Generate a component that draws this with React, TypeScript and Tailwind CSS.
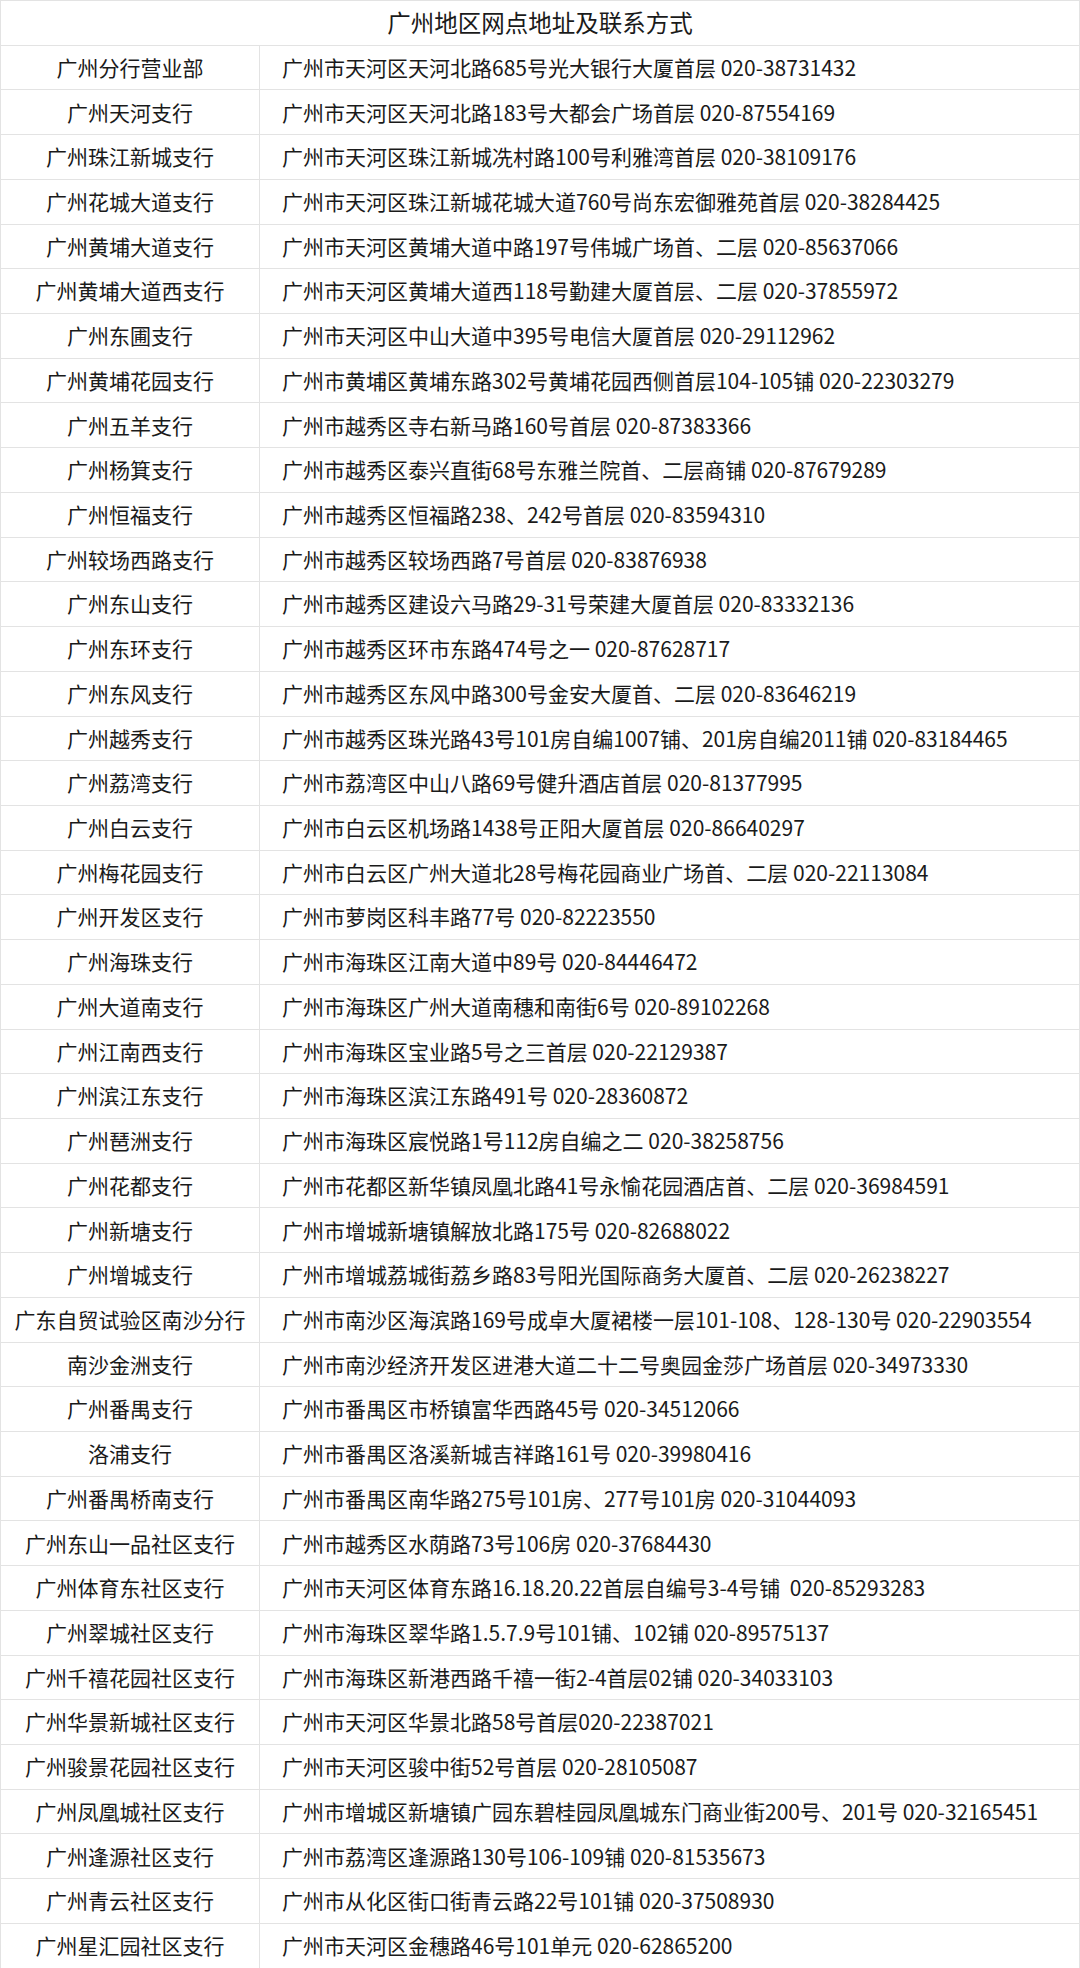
const branches: [string, string][] = [
  ['广州分行营业部', '广州市天河区天河北路685号光大银行大厦首层 020-38731432'],
  ['广州天河支行', '广州市天河区天河北路183号大都会广场首层 020-87554169'],
  ['广州珠江新城支行', '广州市天河区珠江新城冼村路100号利雅湾首层 020-38109176'],
  ['广州花城大道支行', '广州市天河区珠江新城花城大道760号尚东宏御雅苑首层 020-38284425'],
  ['广州黄埔大道支行', '广州市天河区黄埔大道中路197号伟城广场首、二层 020-85637066'],
  ['广州黄埔大道西支行', '广州市天河区黄埔大道西118号勤建大厦首层、二层 020-37855972'],
  ['广州东圃支行', '广州市天河区中山大道中395号电信大厦首层 020-29112962'],
  ['广州黄埔花园支行', '广州市黄埔区黄埔东路302号黄埔花园西侧首层104-105铺 020-22303279'],
  ['广州五羊支行', '广州市越秀区寺右新马路160号首层 020-87383366'],
  ['广州杨箕支行', '广州市越秀区泰兴直街68号东雅兰院首、二层商铺 020-87679289'],
  ['广州恒福支行', '广州市越秀区恒福路238、242号首层 020-83594310'],
  ['广州较场西路支行', '广州市越秀区较场西路7号首层 020-83876938'],
  ['广州东山支行', '广州市越秀区建设六马路29-31号荣建大厦首层 020-83332136'],
  ['广州东环支行', '广州市越秀区环市东路474号之一 020-87628717'],
  ['广州东风支行', '广州市越秀区东风中路300号金安大厦首、二层 020-83646219'],
  ['广州越秀支行', '广州市越秀区珠光路43号101房自编1007铺、201房自编2011铺 020-83184465'],
  ['广州荔湾支行', '广州市荔湾区中山八路69号健升酒店首层 020-81377995'],
  ['广州白云支行', '广州市白云区机场路1438号正阳大厦首层 020-86640297'],
  ['广州梅花园支行', '广州市白云区广州大道北28号梅花园商业广场首、二层 020-22113084'],
  ['广州开发区支行', '广州市萝岗区科丰路77号 020-82223550'],
  ['广州海珠支行', '广州市海珠区江南大道中89号 020-84446472'],
  ['广州大道南支行', '广州市海珠区广州大道南穗和南街6号 020-89102268'],
  ['广州江南西支行', '广州市海珠区宝业路5号之三首层 020-22129387'],
  ['广州滨江东支行', '广州市海珠区滨江东路491号 020-28360872'],
  ['广州琶洲支行', '广州市海珠区宸悦路1号112房自编之二 020-38258756'],
  ['广州花都支行', '广州市花都区新华镇凤凰北路41号永愉花园酒店首、二层 020-36984591'],
  ['广州新塘支行', '广州市增城新塘镇解放北路175号 020-82688022'],
  ['广州增城支行', '广州市增城荔城街荔乡路83号阳光国际商务大厦首、二层 020-26238227'],
  ['广东自贸试验区南沙分行', '广州市南沙区海滨路169号成卓大厦裙楼一层101-108、128-130号 020-22903554'],
  ['南沙金洲支行', '广州市南沙经济开发区进港大道二十二号奥园金莎广场首层 020-34973330'],
  ['广州番禺支行', '广州市番禺区市桥镇富华西路45号 020-34512066'],
  ['洛浦支行', '广州市番禺区洛溪新城吉祥路161号 020-39980416'],
  ['广州番禺桥南支行', '广州市番禺区南华路275号101房、277号101房 020-31044093'],
  ['广州东山一品社区支行', '广州市越秀区水荫路73号106房 020-37684430'],
  ['广州体育东社区支行', '广州市天河区体育东路16.18.20.22首层自编号3-4号铺  020-85293283'],
  ['广州翠城社区支行', '广州市海珠区翠华路1.5.7.9号101铺、102铺 020-89575137'],
  ['广州千禧花园社区支行', '广州市海珠区新港西路千禧一街2-4首层02铺 020-34033103'],
  ['广州华景新城社区支行', '广州市天河区华景北路58号首层020-22387021'],
  ['广州骏景花园社区支行', '广州市天河区骏中街52号首层 020-28105087'],
  ['广州凤凰城社区支行', '广州市增城区新塘镇广园东碧桂园凤凰城东门商业街200号、201号 020-32165451'],
  ['广州逢源社区支行', '广州市荔湾区逢源路130号106-109铺 020-81535673'],
  ['广州青云社区支行', '广州市从化区街口街青云路22号101铺 020-37508930'],
  ['广州星汇园社区支行', '广州市天河区金穗路46号101单元 020-62865200'],
];

export default function App() {
  return (
    <div className="w-[1080px] bg-white text-[#1a1a1a] font-['Noto_Sans_CJK_SC','Noto_Sans',sans-serif]">
      <div className="border-l border-r border-t border-[#e3e3e3]">
        <div className="h-[44.73px] flex items-center justify-center border-b border-[#e3e3e3] text-[23.5px]">
          广州地区网点地址及联系方式
        </div>
        {branches.map(([name, addr]) => (
          <div key={name} className="h-[44.73px] flex border-b border-[#e3e3e3] text-[21px]">
            <div className="w-[259px] shrink-0 flex items-center justify-center border-r border-[#e3e3e3] whitespace-nowrap">
              {name}
            </div>
            <div className="flex-1 flex items-center pl-[22px] whitespace-pre">{addr}</div>
          </div>
        ))}
      </div>
    </div>
  );
}
